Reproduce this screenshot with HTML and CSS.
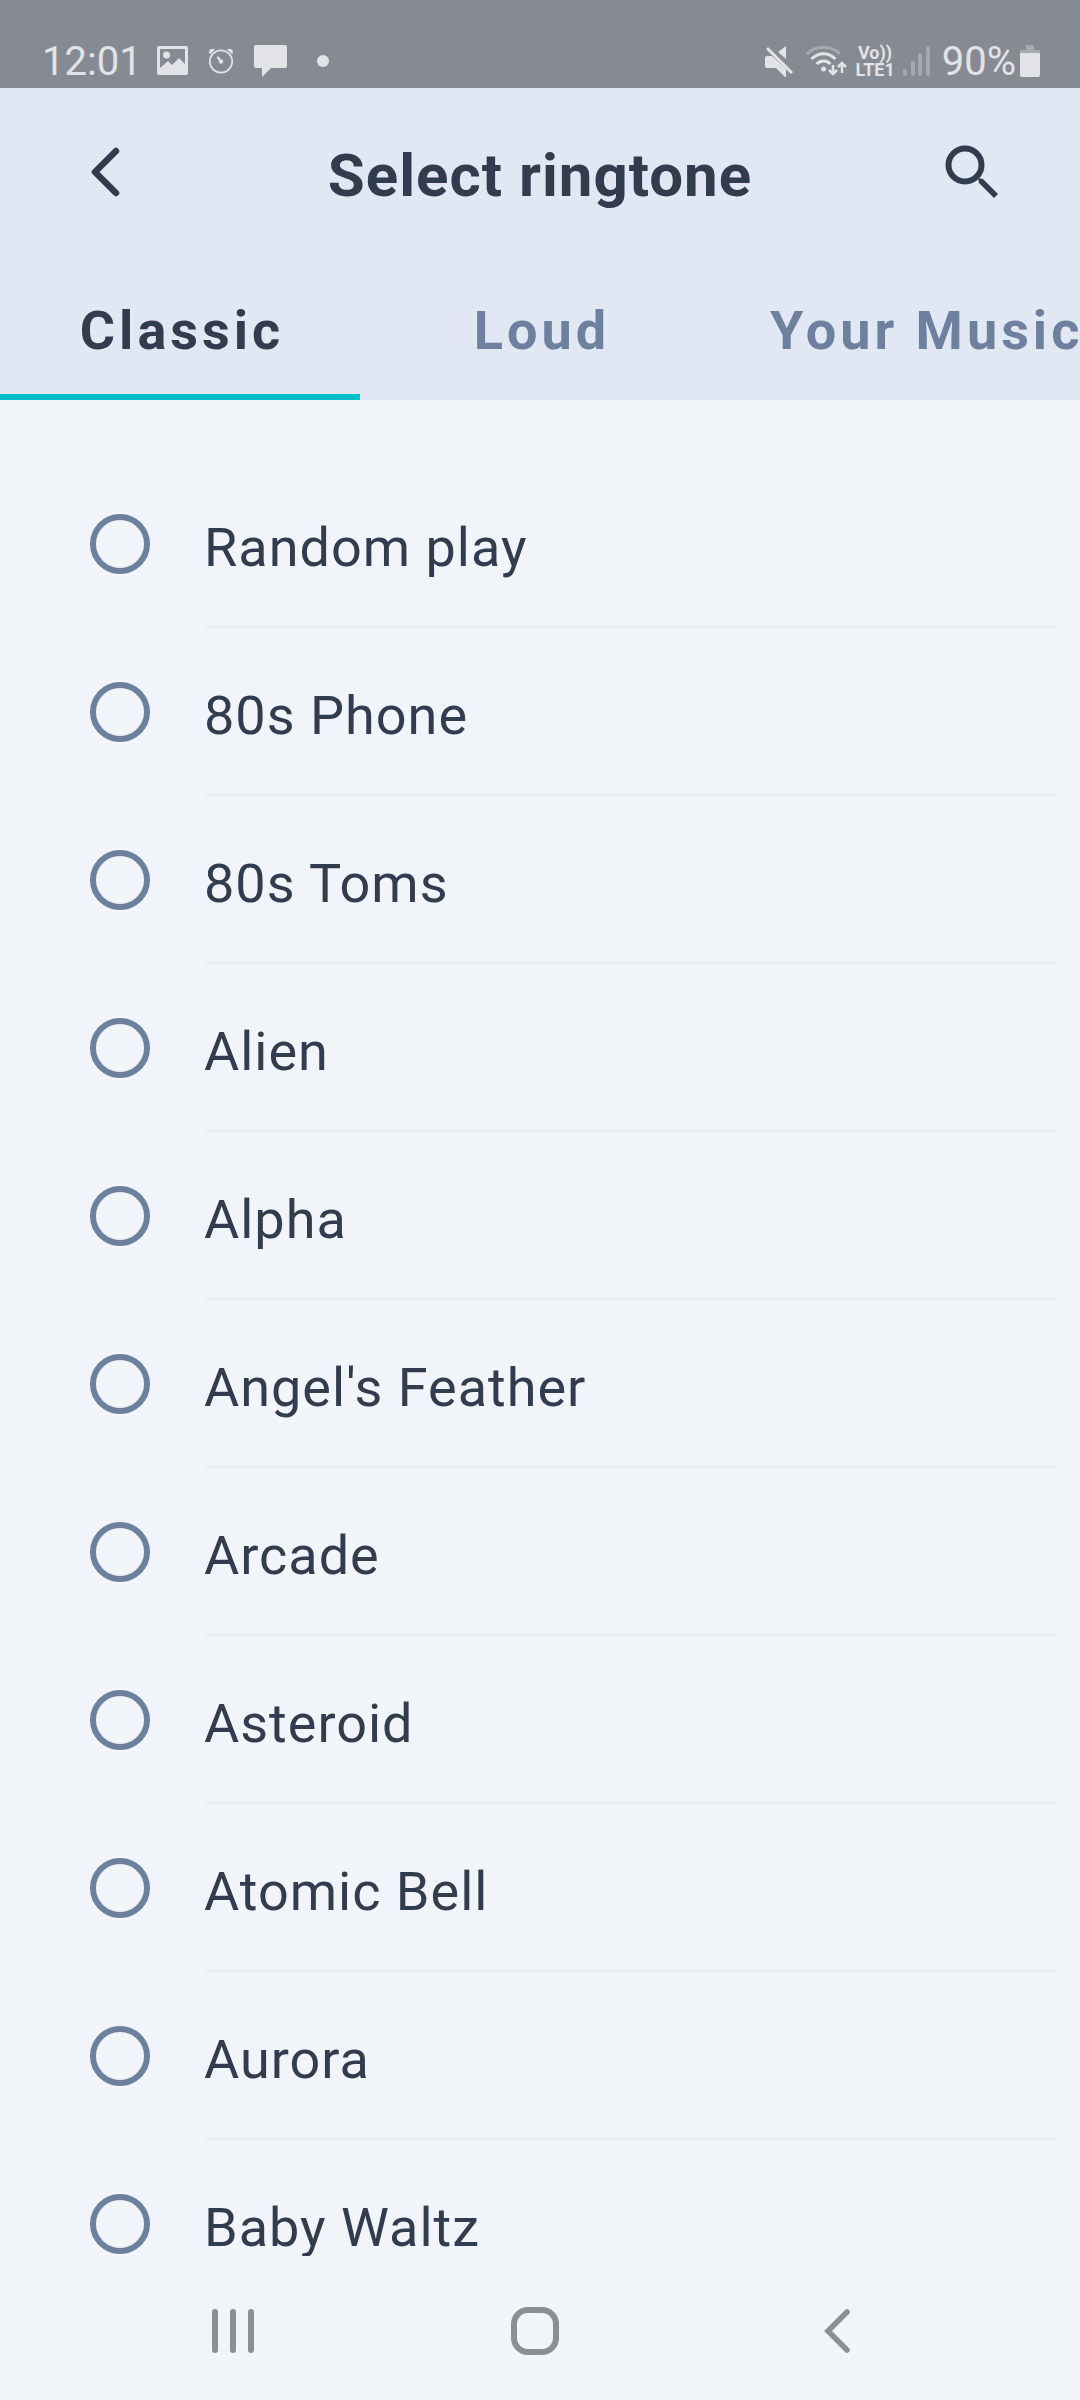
FILE: index.html
```html
<!DOCTYPE html>
<html lang="en">
<head>
  <meta charset="UTF-8">
  <meta name="viewport" content="width=device-width, initial-scale=1.0">
  <title>Select ringtone</title>
  <link rel="stylesheet" href="styles.css">
</head>
<body>
  <div class="status-bar">
    <div class="status-group status-left">
      <span class="status-text clock">12:01</span>
      <!-- picture -->
      <svg width="31" height="30" viewBox="0 0 31 30">
        <path fill="currentColor" fill-rule="evenodd" d="M2 0h27a2 2 0 0 1 2 2v25a2 2 0 0 1-2 2H2a2 2 0 0 1-2-2V2a2 2 0 0 1 2-2zM3 3v19l8-7 4 4 7-7 6 6V3z"/>
        <circle cx="9.500" cy="9" r="3.500" fill="currentColor"/>
      </svg>
      <!-- alarm -->
      <svg width="26" height="26" viewBox="0 0 26 26">
        <circle cx="13" cy="13.500" r="11.200" fill="none" stroke="currentColor" stroke-width="1.700"/>
        <path fill="currentColor" d="M1 5c0-4 3-5 6-3.500L2 6zM25 5c0-4-3-5-6-3.500L24 6z"/>
        <path stroke="currentColor" stroke-width="2.200" stroke-linecap="round" d="M10 9.500l3 4"/>
        <circle cx="13" cy="13.500" r="2.200" fill="currentColor"/>
      </svg>
      <!-- message -->
      <svg width="33" height="33" viewBox="0 0 33 33">
        <path fill="currentColor" d="M2 0h29a2 2 0 0 1 2 2v19a2 2 0 0 1-2 2H17L8 32V23H2a2 2 0 0 1-2-2V2a2 2 0 0 1 2-2z"/>
      </svg>
      <span class="dot"></span>
    </div>
    <div class="status-group status-right">
      <!-- muted -->
      <svg class="mute" width="29" height="31" viewBox="0 0 29 31">
        <path fill="currentColor" d="M21 0v13L13 6zM2 10h5l14 13v8h-1l-9-9H2a2 2 0 0 1-2-2v-8a2 2 0 0 1 2-2z"/>
        <path stroke="currentColor" stroke-width="3" d="M2 2l25 25"/>
      </svg>
      <!-- wifi -->
      <svg width="41" height="32" viewBox="0 0 41 32">
        <g fill="none" stroke="currentColor" stroke-width="3">
          <path opacity=".35" d="M1 9c9-9 24-9 33 0"/>
          <path d="M5.500 14c7-7 17-7 24 0M10.500 19c4-4 10-4 14 0"/>
          <path stroke-width="2.500" d="M27 20v9M23 25l4 4 4-4M36 28V19M32 22l4-4 4 4"/>
        </g>
        <circle cx="17.500" cy="24" r="2.500" fill="currentColor"/>
      </svg>
      <span class="network">
        <span>Vo))</span>
        <span>LTE1</span>
      </span>
      <!-- signal -->
      <svg class="signal" width="27" height="30" viewBox="0 0 27 30">
        <path opacity=".35" stroke="currentColor" stroke-width="4" stroke-linecap="round" d="M2 25v3M10 17v11M17 9v19M25 2v26"/>
      </svg>
      <span class="status-text">90%</span>
      <!-- battery -->
      <svg class="battery" width="20" height="32" viewBox="0 0 20 32">
        <path opacity=".35" fill="currentColor" d="M6 0h8v5h6v3H0V5h6z"/>
        <path fill="currentColor" d="M0 8h20v22a2 2 0 0 1-2 2H2a2 2 0 0 1-2-2z"/>
      </svg>
    </div>
  </div>

  <header class="header">
    <div class="toolbar">
      <button class="icon-btn" aria-label="Back">
        <svg width="36" height="50" viewBox="0 0 36 50">
          <path fill="none" stroke="currentColor" stroke-width="6.500" stroke-linecap="round" stroke-linejoin="round" d="M26 4L5 25l21 21"/>
        </svg>
      </button>
      <h1>Select ringtone</h1>
      <button class="icon-btn" aria-label="Search">
        <svg width="54" height="54" viewBox="0 0 54 54">
          <circle cx="20" cy="20" r="16.500" fill="none" stroke="currentColor" stroke-width="6"/>
          <path fill="currentColor" d="M33 33l5 1 15 15-4 4-15-15z"/>
        </svg>
      </button>
    </div>
    <nav class="tabs" role="tablist">
      <button class="tab active" role="tab" aria-selected="true">Classic</button>
      <button class="tab" role="tab" aria-selected="false">Loud</button>
      <button class="tab" role="tab" aria-selected="false">Your Music</button>
    </nav>
  </header>

  <main class="list-wrap">
    <ul class="list">
      <li><input type="radio" name="ringtone" id="r1"><label for="r1">Random play</label></li>
      <li><input type="radio" name="ringtone" id="r2"><label for="r2">80s Phone</label></li>
      <li><input type="radio" name="ringtone" id="r3"><label for="r3">80s Toms</label></li>
      <li><input type="radio" name="ringtone" id="r4"><label for="r4">Alien</label></li>
      <li><input type="radio" name="ringtone" id="r5"><label for="r5">Alpha</label></li>
      <li><input type="radio" name="ringtone" id="r6"><label for="r6">Angel's Feather</label></li>
      <li><input type="radio" name="ringtone" id="r7"><label for="r7">Arcade</label></li>
      <li><input type="radio" name="ringtone" id="r8"><label for="r8">Asteroid</label></li>
      <li><input type="radio" name="ringtone" id="r9"><label for="r9">Atomic Bell</label></li>
      <li><input type="radio" name="ringtone" id="r10"><label for="r10">Aurora</label></li>
      <li><input type="radio" name="ringtone" id="r11"><label for="r11">Baby Waltz</label></li>
    </ul>
  </main>

  <footer class="nav-bar">
    <button aria-label="Recent apps">
      <svg width="42" height="46" viewBox="0 0 42 46">
        <path stroke="currentColor" stroke-width="6" stroke-linecap="round" d="M3 4v38M21 4v38M39 4v38"/>
      </svg>
    </button>
    <button aria-label="Home">
      <svg width="48" height="48" viewBox="0 0 48 48">
        <rect x="3" y="3" width="42" height="42" rx="14" fill="none" stroke="currentColor" stroke-width="6"/>
      </svg>
    </button>
    <button aria-label="Back">
      <svg width="28" height="46" viewBox="0 0 28 46">
        <path fill="none" stroke="currentColor" stroke-width="5.500" stroke-linecap="round" d="M24 4L5 23l19 19"/>
      </svg>
    </button>
  </footer>
</body>
</html>
```

FILE: styles.css
```css
* {
  box-sizing: border-box;
}

body {
  margin: 0;
  height: 100vh;
  display: flex;
  flex-direction: column;
  overflow: hidden;
  background: #f1f5fa;
  color: #313d4f;
  font-family: Roboto, sans-serif;
}

button {
  padding: 0;
  border: none;
  background: none;
  color: inherit;
  font: inherit;
  cursor: pointer;
}

svg {
  display: block;
  flex: none;
}

.status-bar {
  display: flex;
  justify-content: space-between;
  height: 88px;
  padding: 34px 40px 0 42px;
  background: #868a92;
  color: #e1e3e6;
}

.status-group {
  display: flex;
  align-items: center;
}

.status-left {
  gap: 20px;
}

.status-right {
  gap: 8px;
}

.status-text {
  padding-top: 2px;
  font-size: 40px;
  line-height: 52px;
}

.clock {
  margin-right: -5px;
}

.dot {
  width: 12px;
  height: 12px;
  margin-left: 10px;
  border-radius: 50%;
  background: currentColor;
}

.mute,
.signal {
  margin-right: 4px;
}

.battery {
  margin-left: -4px;
}

.network {
  display: flex;
  flex-direction: column;
  align-items: center;
  font-size: 18px;
  font-weight: bold;
  line-height: 17px;
}

.header {
  background: #e1e8f4;
}

.toolbar {
  display: flex;
  align-items: center;
  justify-content: space-between;
  height: 168px;
  padding: 0 60px;
}

.icon-btn {
  display: flex;
  align-items: center;
  justify-content: center;
  width: 96px;
  height: 96px;
}

h1 {
  margin: 0;
  padding-top: 6px;
  font-size: 60px;
  font-weight: bold;
  letter-spacing: 1px;
}

.tabs {
  display: flex;
  overflow: hidden;
}

.tab {
  flex: none;
  min-width: 33.3333%;
  height: 144px;
  padding: 10px 46px 0 50px;
  border-bottom: 6px solid transparent;
  color: #6d809e;
  font-size: 54px;
  font-weight: bold;
  letter-spacing: 4px;
}

.tab.active {
  border-bottom-color: #00bfc8;
  color: #313d4f;
}

.list-wrap {
  flex: 1;
  min-height: 0;
  overflow: hidden;
}

.list {
  margin: 0;
  padding: 60px 24px 0 90px;
  list-style: none;
}

.list li {
  display: flex;
  align-items: center;
  gap: 54px;
  height: 168px;
}

.list input {
  appearance: none;
  flex: none;
  width: 60px;
  height: 60px;
  margin: 0;
  border: 6px solid #6d809e;
  border-radius: 50%;
}

.list input:checked {
  background: #00bfc8;
}

.list label {
  flex: 1;
  height: 168px;
  padding-top: 6px;
  border-bottom: 3px solid #e8eff7;
  font-size: 54px;
  line-height: 164px;
  letter-spacing: 1px;
}

.nav-bar {
  display: grid;
  grid-template-columns: repeat(3, 1fr);
  height: 144px;
  padding: 6px 92px 0 82px;
  color: #8b8f92;
}

.nav-bar button {
  display: flex;
  align-items: center;
  justify-content: center;
}
```
